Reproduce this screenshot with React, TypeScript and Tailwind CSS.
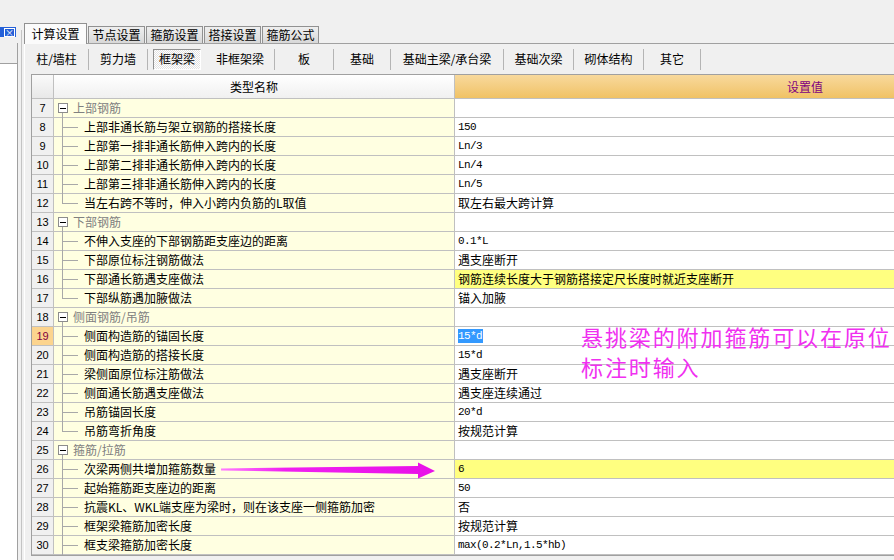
import React from "react";

type Row = {
  n: number;
  name: string;
  value?: string;
  group?: boolean;
  last?: boolean;
  hl?: boolean;
  sel?: boolean;
};

const rows: Row[] = [
  { n: 7, name: "上部钢筋", group: true },
  { n: 8, name: "上部非通长筋与架立钢筋的搭接长度", value: "150" },
  { n: 9, name: "上部第一排非通长筋伸入跨内的长度", value: "Ln/3" },
  { n: 10, name: "上部第二排非通长筋伸入跨内的长度", value: "Ln/4" },
  { n: 11, name: "上部第三排非通长筋伸入跨内的长度", value: "Ln/5" },
  { n: 12, name: "当左右跨不等时，伸入小跨内负筋的L取值", value: "取左右最大跨计算", last: true },
  { n: 13, name: "下部钢筋", group: true },
  { n: 14, name: "不伸入支座的下部钢筋距支座边的距离", value: "0.1*L" },
  { n: 15, name: "下部原位标注钢筋做法", value: "遇支座断开" },
  { n: 16, name: "下部通长筋遇支座做法", value: "钢筋连续长度大于钢筋搭接定尺长度时就近支座断开", hl: true },
  { n: 17, name: "下部纵筋遇加腋做法", value: "锚入加腋", last: true },
  { n: 18, name: "侧面钢筋/吊筋", group: true },
  { n: 19, name: "侧面构造筋的锚固长度", value: "15*d", sel: true },
  { n: 20, name: "侧面构造筋的搭接长度", value: "15*d" },
  { n: 21, name: "梁侧面原位标注筋做法", value: "遇支座断开" },
  { n: 22, name: "侧面通长筋遇支座做法", value: "遇支座连续通过" },
  { n: 23, name: "吊筋锚固长度", value: "20*d" },
  { n: 24, name: "吊筋弯折角度", value: "按规范计算", last: true },
  { n: 25, name: "箍筋/拉筋", group: true },
  { n: 26, name: "次梁两侧共增加箍筋数量", value: "6", hl: true },
  { n: 27, name: "起始箍筋距支座边的距离", value: "50" },
  { n: 28, name: "抗震KL、WKL端支座为梁时，则在该支座一侧箍筋加密", value: "否" },
  { n: 29, name: "框架梁箍筋加密长度", value: "按规范计算" },
  { n: 30, name: "框支梁箍筋加密长度", value: "max(0.2*Ln,1.5*hb)" },
];

const topTabs = ["计算设置", "节点设置", "箍筋设置", "搭接设置", "箍筋公式"];

const subTabs = [
  { label: "柱/墙柱", w: "w-[63px]" },
  { label: "剪力墙", w: "w-[58px]" },
  { label: "框架梁", w: "w-[58px]", active: true },
  { label: "非框架梁", w: "w-[68px]" },
  { label: "板", w: "w-[58px]" },
  { label: "基础", w: "w-[56px]" },
  { label: "基础主梁/承台梁", w: "w-[112px]" },
  { label: "基础次梁", w: "w-[69px]" },
  { label: "砌体结构", w: "w-[69px]" },
  { label: "其它", w: "w-[56px]" },
];

const isAscii = (s: string) => /^[\x20-\x7e]+$/.test(s);

function GridRow({ r }: { r: Row }) {
  return (
    <div className="flex h-[19px] shrink-0 border-b border-[#c0c0c0]">
      <div
        className={
          r.sel
            ? "w-[22px] shrink-0 border-r border-[#c0c0c0] bg-[#fcd48e] text-[#800040] text-center text-[11px] leading-[18px] font-['Liberation_Sans',sans-serif]"
            : "w-[22px] shrink-0 border-r border-[#c0c0c0] bg-[#f0f0f0] text-black text-center text-[11px] leading-[18px] font-['Liberation_Sans',sans-serif]"
        }
      >
        {r.n}
      </div>
      <div className="relative w-[401px] shrink-0 border-r border-[#c0c0c0] bg-[#ffffe1]">
        {r.group ? (
          <>
            <span className="absolute left-[4px] top-[4px] w-[10px] h-[10px] border border-[#8c8c8c] bg-white flex items-center justify-center">
              <span className="w-[6px] h-px bg-black" />
            </span>
            <span className="absolute left-[8px] top-[14px] bottom-[-1px] w-px bg-[#a8a8a8]" />
            <span className="absolute left-[19px] top-0 text-[12px] leading-[18px] text-[#808080]">{r.name}</span>
          </>
        ) : (
          <>
            <span
              className={
                r.last
                  ? "absolute left-[8px] top-0 h-[9px] w-px bg-[#a8a8a8]"
                  : "absolute left-[8px] top-0 bottom-[-1px] w-px bg-[#a8a8a8]"
              }
            />
            <span className="absolute left-[8px] top-[9px] w-[16px] h-px bg-[#a8a8a8]" />
            <span className="absolute left-[30px] top-0 text-[12px] leading-[18px] text-black whitespace-nowrap">{r.name}</span>
          </>
        )}
      </div>
      <div
        className={
          r.hl
            ? "w-[700px] shrink-0 bg-[#ffff80] pl-[3px] flex items-center"
            : "w-[700px] shrink-0 bg-white pl-[3px] flex items-center"
        }
      >
        {r.value && (
          <span
            className={
              (isAscii(r.value)
                ? "font-['Liberation_Mono',monospace] text-[11px] tracking-[-0.6px] leading-[14px]"
                : "text-[12px] leading-[18px]") +
              (r.sel ? " bg-[#3399ff] text-white pr-[1px]" : " text-black")
            }
          >
            {r.value}
          </span>
        )}
      </div>
    </div>
  );
}

export default function App() {
  return (
    <div className="relative w-[894px] h-[560px] overflow-hidden bg-[#f0f0f0] flex font-['Noto_Sans_CJK_SC',sans-serif]">
      {/* left docked panel */}
      <div className="w-[18px] shrink-0 flex flex-col">
        <div className="h-[27px]" />
        <div className="h-[10px] w-[16px] bg-[#2460d8] flex items-center justify-end pr-[1px]">
          <span className="w-[11px] h-[9px] border border-white flex items-center justify-center text-white text-[9px] leading-none">
            ×
          </span>
        </div>
        <div className="h-[6px]" />
        <div className="h-[20px] border-r border-[#a0a0a0]" />
        <div className="flex-1 bg-white border-t border-r border-[#a0a0a0]" />
      </div>
      <div className="w-[6px] shrink-0 pt-[30px] pl-[3px]">
        <div className="w-px h-full bg-[#c4c4c4]" />
      </div>

      {/* main */}
      <div className="flex-1 min-w-0 flex flex-col">
        <div className="h-[24px] shrink-0" />
        <div className="h-[19px] shrink-0 flex items-end">
          {topTabs.map((t, i) =>
            i === 0 ? (
              <div
                key={t}
                className="relative z-10 h-[21px] -mb-px w-[63px] shrink-0 bg-[#fbfbfb] border border-b-0 border-[#919191] flex items-center justify-center text-[12px] text-black"
              >
                {t}
              </div>
            ) : (
              <div
                key={t}
                className="h-[17px] ml-[1px] w-[57px] shrink-0 bg-linear-to-b from-[#efefef] to-[#d8d8d8] border border-b-0 border-[#919191] flex items-center justify-center text-[12px] text-black"
              >
                {t}
              </div>
            )
          )}
        </div>
        <div className="flex-1 min-h-0 flex flex-col border-t border-l border-[#a0a0a0] border-l-white">
          {/* sub tabs */}
          <div className="h-[30px] shrink-0 flex items-center">
            {subTabs.map((s, i) => (
              <React.Fragment key={s.label}>
                {i > 0 && i !== 3 && <div className="w-px h-[21px] bg-[#b4b4b4] shrink-0" />}
                <div className={s.w + " shrink-0 flex items-center justify-center"}>
                  {s.active ? (
                    <div className="w-[48px] h-[21px] border border-t-[#909090] border-l-[#909090] border-b-white border-r-white bg-[repeating-conic-gradient(#ffffff_0_25%,#e2e2e2_0_50%)] bg-[length:2px_2px] flex items-center justify-center text-[12px] text-black">
                      {s.label}
                    </div>
                  ) : (
                    <span className="text-[12px] text-black">{s.label}</span>
                  )}
                </div>
              </React.Fragment>
            ))}
            <div className="w-px h-[21px] bg-[#b4b4b4] shrink-0" />
          </div>

          {/* grid */}
          <div className="ml-[6px] h-[482px] shrink-0 overflow-hidden border-t border-l border-b border-[#a0a0a0] flex flex-col bg-white">
            <div className="flex h-[24px] shrink-0 border-b border-[#c0c0c0]">
              <div className="w-[22px] shrink-0 border-r border-[#c0c0c0] bg-linear-to-b from-[#fafafa] to-[#e8e8e8]" />
              <div className="w-[401px] shrink-0 border-r border-[#c0c0c0] bg-linear-to-b from-white to-[#f0f0f0] flex items-center justify-center text-[12px] text-black">
                类型名称
              </div>
              <div className="w-[700px] shrink-0 bg-linear-to-b from-[#f8d99c] to-[#f0c264] flex items-center justify-center text-[12px] text-[#800080]">
                设置值
              </div>
            </div>
            {rows.map((r) => (
              <GridRow key={r.n} r={r} />
            ))}
          </div>
        </div>
      </div>

      {/* annotation */}
      <div className="absolute left-[581px] top-[321px] text-[22px] leading-[30px] tracking-[1.9px] text-[#f030f0] whitespace-nowrap">
        <div>悬挑梁的附加箍筋可以在原位</div>
        <div>标注时输入</div>
      </div>
      <svg className="absolute left-0 top-0 pointer-events-none" width="894" height="560">
        <defs>
          <linearGradient id="ar" x1="0" x2="1" y1="0" y2="0">
            <stop offset="0" stopColor="#ff7cff" />
            <stop offset="0.3" stopColor="#f020f0" />
            <stop offset="1" stopColor="#e812e8" />
          </linearGradient>
        </defs>
        <polygon
          points="221,468.5 418,466 418,462.5 435,471 418,478.5 418,474 221,470.5"
          fill="url(#ar)"
        />
      </svg>
    </div>
  );
}
